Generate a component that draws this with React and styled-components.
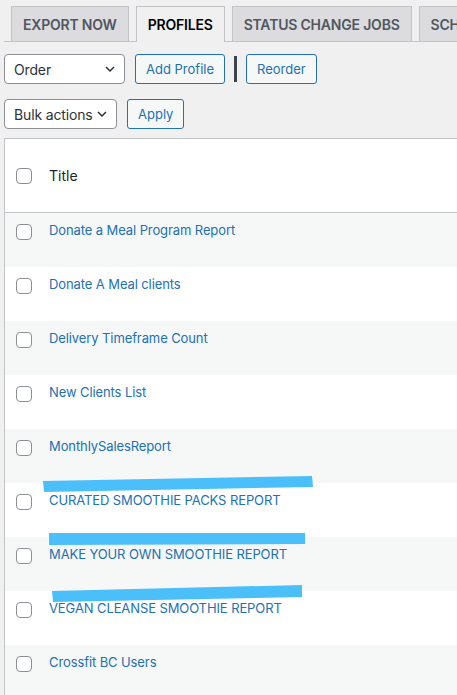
import styled, { createGlobalStyle } from "styled-components";

const GlobalStyle = createGlobalStyle`
  html, body {
    margin: 0;
    padding: 0;
    background: #f0f0f1;
    overflow: hidden;
  }
  body {
    font-family: Inter, "Liberation Sans", sans-serif;
    color: #3c434a;
  }
`;

const Page = styled.div`
  position: relative;
  width: 457px;
  height: 695px;
  overflow: hidden;
  padding: 6px 0 0 4px;
  box-sizing: border-box;
`;

const TabBar = styled.div`
  display: flex;
  gap: 7px;
  padding-left: 7px;
  border-bottom: 1px solid #c3c4c7;
  white-space: nowrap;
`;

const Tab = styled.div`
  flex: none;
  box-sizing: border-box;
  display: flex;
  align-items: center;
  padding: 0 11px;
  font-size: 14px;
  font-weight: 600;
  letter-spacing: -0.2px;
  border: 1px solid #c3c4c7;
  border-bottom: none;
  margin-bottom: ${(p) => (p.$active ? "-1px" : "0")};
  height: ${(p) => (p.$active ? "36px" : "35px")};
  background: ${(p) => (p.$active ? "#f0f0f1" : "#dcdcde")};
  color: ${(p) => (p.$active ? "#000" : "#50575e")};
`;

const Toolbar = styled.div`
  display: flex;
  align-items: center;
  gap: 10px;
  margin-top: ${(p) => p.$top}px;
`;

const Select = styled.div`
  box-sizing: border-box;
  width: ${(p) => p.$w}px;
  height: 30px;
  display: flex;
  align-items: center;
  justify-content: space-between;
  padding: 0 7px 0 9px;
  background: #fff;
  border: 1px solid #8c8f94;
  border-radius: 4px;
  font-size: 14px;
  letter-spacing: -0.15px;
  white-space: nowrap;
  color: #2c3338;
`;

const Button = styled.div`
  box-sizing: border-box;
  height: 30px;
  display: flex;
  align-items: center;
  padding: 0 10px;
  background: #f6f7f7;
  border: 1px solid #2271b1;
  border-radius: 3px;
  font-size: 13px;
  white-space: nowrap;
  color: #2271b1;
`;

const Sep = styled.span`
  width: 3px;
  height: 26px;
  background: #3c434a;
  margin: 0 -1px;
`;

const Table = styled.div`
  margin-top: 9px;
  background: #fff;
  border-left: 1px solid #c3c4c7;
  border-top: 1px solid #c3c4c7;
  width: 500px;
`;

const HeadRow = styled.div`
  height: 73px;
  display: flex;
  align-items: center;
  padding-left: 11px;
  border-bottom: 1px solid #c3c4c7;
  font-size: 14px;
  color: #1d2327;
`;

const Row = styled.div`
  height: 54px;
  box-sizing: border-box;
  display: flex;
  align-items: flex-start;
  padding: 11px 0 0 11px;
  background: ${(p) => (p.$alt ? "#f6f7f7" : "#fff")};
`;

const Check = styled.span`
  flex: none;
  box-sizing: border-box;
  width: 16px;
  height: 16px;
  border: 1px solid #8c8f94;
  border-radius: 4px;
  background: #fff;
`;

const Title = styled.span`
  margin-left: 17px;
`;

const Link = styled.span`
  margin-left: 17px;
  margin-top: -3px;
  font-size: 13px;
  letter-spacing: -0.1px;
  line-height: 19.5px;
  color: #2271b1;
`;

const Marks = styled.svg`
  position: absolute;
  top: 0;
  left: 0;
  pointer-events: none;
`;

const Chevron = () => (
  <svg width="14" height="14" viewBox="0 0 14 14" style={{ flex: "none" }}>
    <path d="M3 5l4 4 4-4" fill="none" stroke="#2c3338" strokeWidth="1.5" />
  </svg>
);

const rows = [
  "Donate a Meal Program Report",
  "Donate A Meal clients",
  "Delivery Timeframe Count",
  "New Clients List",
  "MonthlySalesReport",
  "CURATED SMOOTHIE PACKS REPORT",
  "MAKE YOUR OWN SMOOTHIE REPORT",
  "VEGAN CLEANSE SMOOTHIE REPORT",
  "Crossfit BC Users",
];

export default function App() {
  return (
    <>
      <GlobalStyle />
      <Page>
        <TabBar>
          <Tab>EXPORT NOW</Tab>
          <Tab $active>PROFILES</Tab>
          <Tab>STATUS CHANGE JOBS</Tab>
          <Tab>SCHEDULED JOBS</Tab>
        </TabBar>
        <Toolbar $top={12}>
          <Select $w={121}>
            Order
            <Chevron />
          </Select>
          <Button>Add Profile</Button>
          <Sep />
          <Button>Reorder</Button>
        </Toolbar>
        <Toolbar $top={15}>
          <Select $w={113}>
            Bulk actions
            <Chevron />
          </Select>
          <Button>Apply</Button>
        </Toolbar>
        <Table>
          <HeadRow>
            <Check />
            <Title>Title</Title>
          </HeadRow>
          {rows.map((r, i) => (
            <Row key={r} $alt={i % 2 === 0}>
              <Check />
              <Link>{r}</Link>
            </Row>
          ))}
        </Table>
        <Marks width="457" height="695">
          <polygon points="43,481 312,476 313,487 44,492" fill="#4bbff9" />
          <polygon points="49,533 305,533 305,544 49,545" fill="#4bbff9" />
          <polygon points="52,591 302,585 302,597 53,602" fill="#4bbff9" />
        </Marks>
      </Page>
    </>
  );
}
